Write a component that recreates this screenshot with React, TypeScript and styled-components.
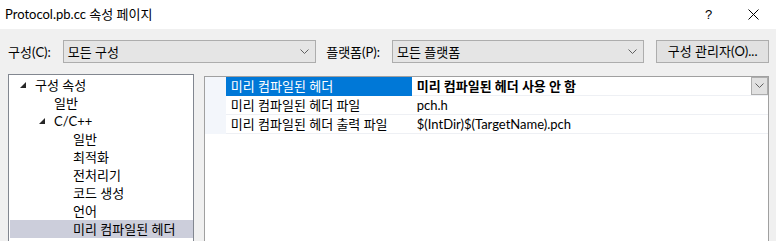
import React from "react";
import styled, { createGlobalStyle } from "styled-components";

const Global = createGlobalStyle`
  html, body { margin: 0; padding: 0; }
  body {
    width: 776px; height: 241px; overflow: hidden;
    background: #f0f0f0;
    font-family: "Lato", "Noto Sans CJK KR", sans-serif;
    font-size: 13px;
    color: #000;
  }
`;

const Window = styled.div`
  width: 776px;
  height: 241px;
  display: flex;
  flex-direction: column;
  overflow: hidden;
`;

const TitleBar = styled.div`
  height: 29px;
  background: #fff;
  display: flex;
  align-items: center;
  padding-left: 5px;
  flex-shrink: 0;
`;

const TitleText = styled.div`
  flex: 1;
  line-height: 16px;
  padding-bottom: 1px;
`;

const TitleButton = styled.div`
  width: 45px;
  height: 29px;
  display: flex;
  align-items: center;
  justify-content: center;
  font-family: "Liberation Sans", sans-serif;
  font-size: 13px;
`;

const Body = styled.div`
  flex: 1;
  padding: 11px 7px 0 8px;
  display: flex;
  flex-direction: column;
`;

const Toolbar = styled.div`
  display: flex;
  align-items: center;
  height: 23px;
`;

const Label = styled.div<{ $w: number; $pad?: number }>`
  width: ${(p) => p.$w}px;
  padding-left: ${(p) => p.$pad ?? 0}px;
  box-sizing: border-box;
  line-height: 16px;
  white-space: nowrap;
`;

const Combo = styled.div<{ $w: number }>`
  width: ${(p) => p.$w}px;
  height: 23px;
  box-sizing: border-box;
  border: 1px solid #adadad;
  background: #e5e5e5;
  display: flex;
  align-items: center;
  padding: 0 6px 0 4px;
  line-height: 16px;
`;

const ComboText = styled.div`
  flex: 1;
`;

const Button = styled.div`
  margin-left: 12px;
  width: 113px;
  height: 23px;
  margin-top: -1px;
  box-sizing: border-box;
  border: 1px solid #adadad;
  background: #e1e1e1;
  display: flex;
  align-items: center;
  justify-content: center;
  line-height: 16px;
  white-space: nowrap;
`;

const Panels = styled.div`
  display: flex;
  align-items: flex-start;
  margin-top: 11px;
  flex: 1;
`;

const Tree = styled.div`
  width: 186px;
  height: 200px;
  box-sizing: border-box;
  border: 1px solid #828790;
  background: #fff;
  padding-top: 1px;
`;

const TreeRow = styled.div<{ $level: number; $selected?: boolean }>`
  height: 18px;
  display: flex;
  align-items: center;
  padding-left: ${(p) => 10 + p.$level * 19}px;
  margin-left: 1px;
  background: ${(p) => (p.$selected ? "#cccedb" : "transparent")};
  line-height: 16px;
  white-space: nowrap;
`;

const Arrow = styled.div`
  width: 15px;
  display: flex;
  align-items: center;
  justify-content: flex-start;
`;

const Grid = styled.div`
  margin-left: 10px;
  margin-top: 2px;
  width: 566px;
  height: 200px;
  box-sizing: border-box;
  border: 1px solid #a0a0a0;
  background: #fff;
`;

const GridRow = styled.div`
  display: flex;
  height: 19px;
`;

const Gutter = styled.div`
  width: 21px;
  background: #f3f6fb;
  flex-shrink: 0;
`;

const NameCell = styled.div<{ $selected?: boolean }>`
  width: 186px;
  box-sizing: border-box;
  padding-left: 5px;
  display: flex;
  align-items: center;
  background: ${(p) => (p.$selected ? "#0078d7" : "#fff")};
  color: ${(p) => (p.$selected ? "#fff" : "#000")};
  border-bottom: 1px solid ${(p) => (p.$selected ? "#0078d7" : "#eef0f4")};
  line-height: 16px;
  white-space: nowrap;
`;

const ValueCell = styled.div<{ $bold?: boolean }>`
  flex: 1;
  box-sizing: border-box;
  padding-left: 5px;
  display: flex;
  align-items: center;
  font-weight: ${(p) => (p.$bold ? 700 : 400)};
  border-bottom: 1px solid #eef0f4;
  line-height: 16px;
  white-space: nowrap;
`;

const ValueText = styled.div`
  flex: 1;
`;

const DropButton = styled.div`
  width: 17px;
  height: 18px;
  box-sizing: border-box;
  border: 1px solid #adadad;
  background: #e1e1e1;
  display: flex;
  align-items: center;
  justify-content: center;
  align-self: flex-start;
`;

const Chevron = () => (
  <svg width="9" height="6" viewBox="0 0 9 6">
    <polyline points="0.5,0.5 4.5,4.5 8.5,0.5" fill="none" stroke="#606060" strokeWidth="1" />
  </svg>
);

const Expander = () => (
  <svg width="6" height="6" viewBox="0 0 6 6">
    <polygon points="6,0 6,6 0,6" fill="#262626" />
  </svg>
);

const CloseIcon = () => (
  <svg width="11" height="11" viewBox="0 0 11 11">
    <line x1="0.5" y1="0.5" x2="10.5" y2="10.5" stroke="#000" strokeWidth="1" />
    <line x1="10.5" y1="0.5" x2="0.5" y2="10.5" stroke="#000" strokeWidth="1" />
  </svg>
);

const treeItems = [
  { label: "구성 속성", level: 0, expander: true },
  { label: "일반", level: 1 },
  { label: "C/C++", level: 1, expander: true },
  { label: "일반", level: 2 },
  { label: "최적화", level: 2 },
  { label: "전처리기", level: 2 },
  { label: "코드 생성", level: 2 },
  { label: "언어", level: 2 },
  { label: "미리 컴파일된 헤더", level: 2, selected: true },
];

const props = [
  { name: "미리 컴파일된 헤더", value: "미리 컴파일된 헤더 사용 안 함", selected: true },
  { name: "미리 컴파일된 헤더 파일", value: "pch.h" },
  { name: "미리 컴파일된 헤더 출력 파일", value: "$(IntDir)$(TargetName).pch" },
];

export default function App() {
  return (
    <>
      <Global />
      <Window>
        <TitleBar>
          <TitleText>Protocol.pb.cc 속성 페이지</TitleText>
          <TitleButton>?</TitleButton>
          <TitleButton>
            <CloseIcon />
          </TitleButton>
        </TitleBar>
        <Body>
          <Toolbar>
            <Label $w={55}>구성(C):</Label>
            <Combo $w={254}>
              <ComboText>모든 구성</ComboText>
              <Chevron />
            </Combo>
            <Label $w={76} $pad={10}>플랫폼(P):</Label>
            <Combo $w={253}>
              <ComboText>모든 플랫폼</ComboText>
              <Chevron />
            </Combo>
            <Button>구성 관리자(O)...</Button>
          </Toolbar>
          <Panels>
            <Tree>
              {treeItems.map((it, i) => (
                <TreeRow key={i} $level={it.level} $selected={it.selected}>
                  <Arrow>{it.expander ? <Expander /> : null}</Arrow>
                  {it.label}
                </TreeRow>
              ))}
            </Tree>
            <Grid>
              {props.map((p, i) => (
                <GridRow key={i}>
                  <Gutter />
                  <NameCell $selected={p.selected}>{p.name}</NameCell>
                  <ValueCell $bold={p.selected}>
                    <ValueText>{p.value}</ValueText>
                    {p.selected ? (
                      <DropButton>
                        <Chevron />
                      </DropButton>
                    ) : null}
                  </ValueCell>
                </GridRow>
              ))}
            </Grid>
          </Panels>
        </Body>
      </Window>
    </>
  );
}
